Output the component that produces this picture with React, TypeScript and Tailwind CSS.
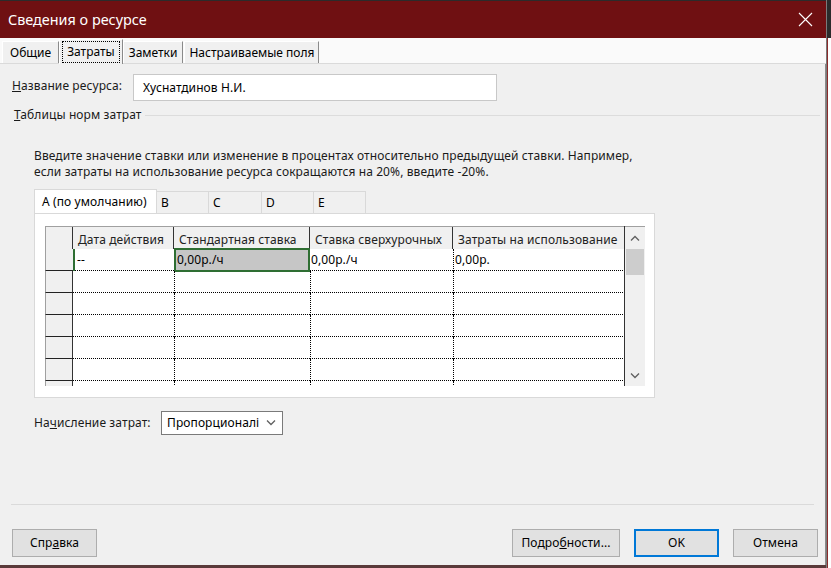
import React from "react";

const font = { fontFamily: '"Noto Sans", "Open Sans", sans-serif' };

const cols = [
  { w: "w-[101px]", label: "Дата действия" },
  { w: "w-[136px]", label: "Стандартная ставка" },
  { w: "w-[143px]", label: "Ставка сверхурочных" },
  { w: "w-[172px]", label: "Затраты на использование" },
];

const firstRow = ["--", "0,00р./ч", "0,00р./ч", "0,00р."];

function Chevron({ up }: { up?: boolean }) {
  return (
    <svg width="10" height="6" viewBox="0 0 10 6" className="block">
      <path
        d={up ? "M1 5.5 L5 1.5 L9 5.5" : "M1 0.5 L5 4.5 L9 0.5"}
        fill="none"
        stroke="#606060"
        strokeWidth="1.3"
      />
    </svg>
  );
}

function Grid() {
  const emptyRows = [0, 1, 2, 3, 4];
  return (
    <div className="flex w-[600px] h-[160px] overflow-hidden">
      <div className="flex flex-col w-[579px]">
        {/* header */}
        <div className="flex h-[23px] bg-[#f0f0f0] border-t border-[#a0a0a0] shrink-0">
          <div className="w-[28px] border-l border-[#a0a0a0] border-r border-r-[#333] shrink-0" />
          {cols.map((c, i) => (
            <div
              key={c.label}
              className={`${c.w} shrink-0 flex items-end pb-[0px] px-[5px] text-[12px] text-[#222] ${
                i < cols.length - 1 ? "border-r border-r-[#333]" : ""
              } whitespace-nowrap`}
            >
              {c.label}
            </div>
          ))}
        </div>
        {/* first row */}
        <div className="flex h-[22px] shrink-0">
          <div className="w-[28px] shrink-0 bg-[#f0f0f0] border-l border-[#a0a0a0] border-b border-b-[#222]" />
          <div className="w-[101px] shrink-0 flex">
            <div className="w-[2px] bg-[#2e6e32]" />
            <div className="flex-1 flex items-center pl-[2px] text-black border-b border-dotted border-black">
              {firstRow[0]}
            </div>
          </div>
          <div className="w-[136px] shrink-0 flex items-center -my-[1px] h-[24px] pl-[1px] bg-[#c6c6c6] border-2 border-[#2e6e32] text-black">
            {firstRow[1]}
          </div>
          <div className="w-[143px] shrink-0 flex items-center pl-[1px] border-b border-dotted border-black text-black">
            {firstRow[2]}
          </div>
          <div className="w-[172px] shrink-0 flex items-center pl-[1px] border-b border-l border-dotted border-black text-black">
            {firstRow[3]}
          </div>
        </div>
        {emptyRows.map((r) => (
          <div key={r} className="flex h-[22px] shrink-0">
            <div className="w-[28px] shrink-0 bg-[#f0f0f0] border-l border-[#a0a0a0] border-b border-b-[#222] border-r border-r-[#333]" />
            {cols.map((c, i) => (
              <div
                key={i}
                className={`${c.w} shrink-0 border-b border-dotted border-black ${
                  i > 0 ? "border-l" : ""
                }`}
              />
            ))}
          </div>
        ))}
        <div className="flex h-[10px] shrink-0">
          <div className="w-[28px] shrink-0 bg-[#f0f0f0] border-l border-[#a0a0a0] border-r border-r-[#333]" />
          {cols.map((c, i) => (
            <div
              key={i}
              className={`${c.w} shrink-0 ${i > 0 ? "border-l border-dotted border-black" : ""}`}
            />
          ))}
        </div>
      </div>
      {/* scrollbar */}
      <div className="w-[21px] flex">
        <div className="w-[1px] bg-[#333]" />
        <div className="flex-1 flex flex-col bg-[#f0f0f0] border-t border-[#a0a0a0]">
          <div className="h-[22px] flex items-center justify-center">
            <Chevron up />
          </div>
          <div className="mx-[1px] h-[26px] bg-[#cdcdcd]" />
          <div className="flex-1" />
          <div className="h-[20px] flex items-center justify-center">
            <Chevron />
          </div>
        </div>
      </div>
    </div>
  );
}

export default function App() {
  return (
    <div className="w-[831px] h-[568px] flex bg-white overflow-hidden tracking-[0.1px]" style={font}>
      <div className="w-[826px] h-full flex flex-col bg-[#f0f0f0]">
        <div className="h-[1px] bg-[#2b2b2b]" />
        {/* title bar */}
        <div className="h-[37px] bg-[#6f1012] flex items-center justify-between pl-[8px] pr-[13px]">
          <div className="text-[14.4px] tracking-normal text-white">Сведения о ресурсе</div>
          <svg width="15" height="15" viewBox="0 0 15 15">
            <path d="M1 1 L14 14 M14 1 L1 14" stroke="white" strokeWidth="1.1" />
          </svg>
        </div>
        {/* tabs */}
        <div className="h-[26px] bg-[#fafafa] flex items-end pl-[2px] border-b border-[#dadada] tracking-normal">
          <div className="h-[22px] px-[7px] flex items-center bg-[#f0f0f0] border-l border-t border-white border-r border-r-[#8a8a8a] text-[12px] text-black">
            Общие
          </div>
          <div className="h-[25px] -mb-[1px] px-[2px] flex items-center bg-[#f0f0f0] border-l border-t border-white border-r border-r-[#8a8a8a] text-[12px] text-black">
            <span className="px-[4px] py-[1px] border border-dotted border-black leading-[18px]">Затраты</span>
          </div>
          <div className="h-[22px] px-[5px] flex items-center bg-[#f0f0f0] border-l border-t border-white border-r border-r-[#8a8a8a] text-[12px] text-black">
            Заметки
          </div>
          <div className="h-[22px] px-[4px] ml-[1px] flex items-center bg-[#f0f0f0] border-l border-t border-white border-r border-r-[#8a8a8a] text-[12px] text-black">
            Настраиваемые поля
          </div>
        </div>
        {/* panel */}
        <div className="flex-1 flex flex-col border-r border-[#8a8a8a] text-[12px] text-[#1a1a1a]">
          <div className="flex items-start pt-[10px] pl-[12px]">
            <div className="w-[121px] pt-[3px]">
              <span className="underline">Н</span>азвание ресурса:
            </div>
            <div className="w-[364px] h-[27px] bg-white border border-[#c8c8c8] flex items-center pl-[9px] text-[12px] text-black">
              Хуснатдинов Н.И.
            </div>
          </div>
          <div className="flex items-center mt-[5px] pl-[14px] pr-[5px]">
            <span>
              <span className="underline">Т</span>аблицы норм затрат
            </span>
            <div className="flex-1 ml-[3px] h-[1px] bg-[#dcdcdc]" />
          </div>
          <div className="pl-[34px] mt-[24px] leading-[16px] text-[#1a1a1a]">
            <div>Введите значение ставки или изменение в процентах относительно предыдущей ставки. Например,</div>
            <div>если затраты на использование ресурса сокращаются на 20%, введите -20%.</div>
          </div>
          {/* inner tabs */}
          <div className="pl-[34px] mt-[9px] flex items-end h-[24px]">
            <div className="w-[123px] h-[24px] bg-white border border-b-0 border-[#d9d9d9] flex items-center pl-[7px] text-black">
              A (по умолчанию)
            </div>
            {["B", "C", "D", "E"].map((t, i) => (
              <div
                key={t}
                className={`${i === 0 ? "w-[52px] border-l-0" : i === 1 ? "w-[54px]" : "w-[53px]"} h-[22px] bg-[#f0f0f0] border border-b-0 border-[#d9d9d9] flex items-center pl-[4px] text-black ${i > 0 ? "-ml-[1px]" : ""}`}
              >
                {t}
              </div>
            ))}
          </div>
          <div className="ml-[34px] w-[621px] h-[185px] bg-white border border-[#d9d9d9] pt-[12px] pl-[10px] text-[12px]">
            <Grid />
          </div>
          {/* cost accrual */}
          <div className="flex items-center pl-[34px] mt-[13px]">
            <div className="w-[127px]">
              На<span className="underline">ч</span>исление затрат:
            </div>
            <div className="w-[122px] h-[24px] bg-white border border-[#7a7a7a] flex items-center pl-[5px] pr-[6px] text-black">
              <span className="flex-1 overflow-hidden whitespace-nowrap">Пропорционалі</span>
              <Chevron />
            </div>
          </div>
          <div className="flex-1" />
          <div className="mx-[11px] h-[1px] bg-[#dadada]" />
          <div className="flex items-center px-[12px] pt-[24px] pb-[8px] text-black">
            <div className="w-[85px] h-[28px] bg-[#e1e1e1] border border-[#adadad] flex items-center justify-center">
              Спр<span className="underline">а</span>вка
            </div>
            <div className="flex-1" />
            <div className="w-[108px] h-[28px] bg-[#e1e1e1] border border-[#adadad] flex items-center justify-center">
              Подро<span className="underline">б</span>ности...
            </div>
            <div className="w-[85px] h-[28px] ml-[14px] bg-[#e1e1e1] border-2 border-[#0078d7] flex items-center justify-center">
              OK
            </div>
            <div className="w-[85px] h-[28px] ml-[14px] mr-[-5px] bg-[#e1e1e1] border border-[#adadad] flex items-center justify-center">
              Отмена
            </div>
          </div>
        </div>
        <div className="h-[3px] bg-[#5a3a3a]" />
      </div>
      <div className="w-[1px] bg-[#7a7a7a]" />
      <div className="w-[4px] flex flex-col">
        <div className="h-[38px] bg-[#2b2b2b]" />
        <div className="flex-1 bg-white border-l border-[#8b2b2b]" />
      </div>
    </div>
  );
}
